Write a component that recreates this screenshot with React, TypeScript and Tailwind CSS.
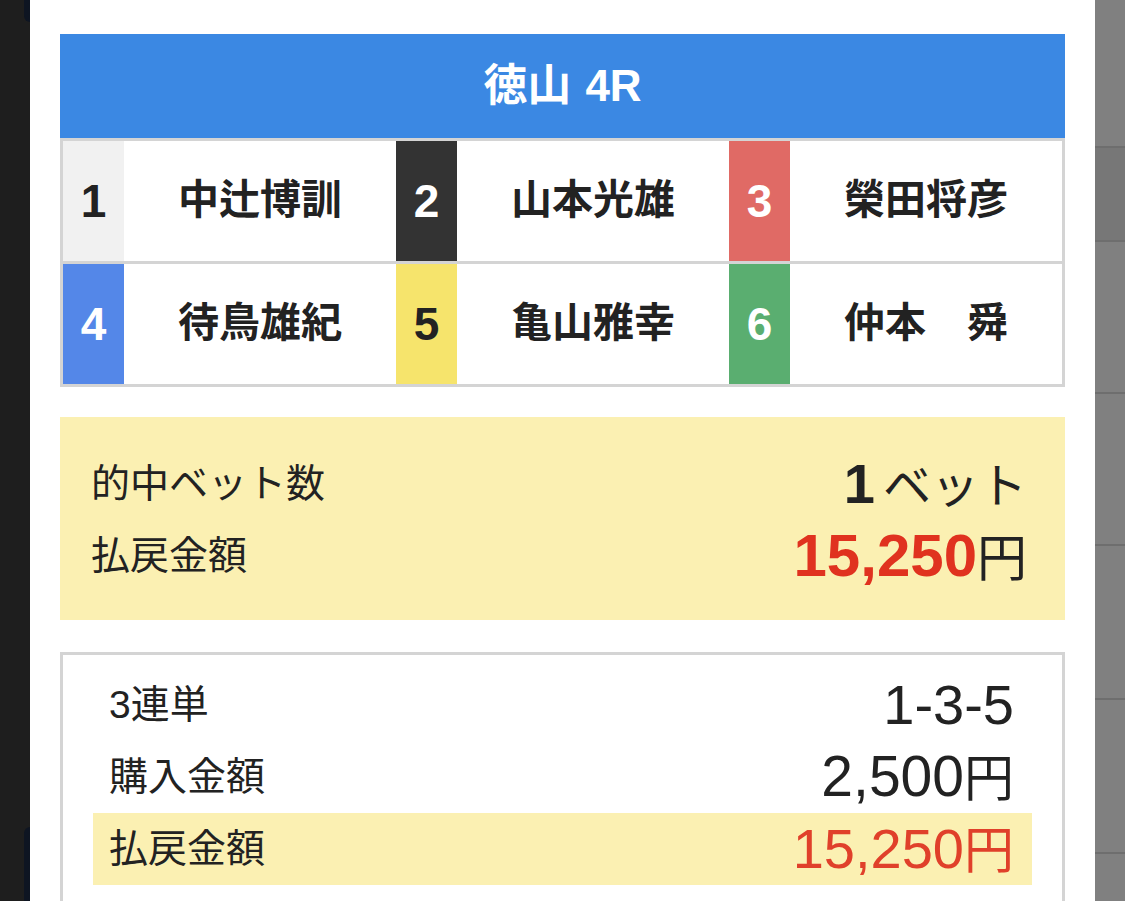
import { FC } from "react";

type Racer = { no: number; name: string; box: string; text: string };

const racers: Racer[] = [
  { no: 1, name: "中辻博訓", box: "bg-[#f1f1f1]", text: "text-[#222]" },
  { no: 2, name: "山本光雄", box: "bg-[#333333]", text: "text-white" },
  { no: 3, name: "榮田将彦", box: "bg-[#e06a65]", text: "text-white" },
  { no: 4, name: "待鳥雄紀", box: "bg-[#5487e8]", text: "text-white" },
  { no: 5, name: "亀山雅幸", box: "bg-[#f6e46c]", text: "text-[#222]" },
  { no: 6, name: "仲本　舜", box: "bg-[#5aae70]", text: "text-white" },
];

const font = "font-['Liberation_Sans','Noto_Sans_CJK_JP',sans-serif]";

const RacerCell: FC<{ r: Racer }> = ({ r }) => (
  <div className="flex h-full">
    <div
      className={`w-[61px] flex items-center justify-center text-[46px] font-bold ${r.box} ${r.text}`}
    >
      {r.no}
    </div>
    <div className="flex-1 flex items-center justify-center text-[41px] font-bold text-[#222] bg-white">
      {r.name}
    </div>
  </div>
);

const App: FC = () => {
  return (
    <div className={`w-[1125px] h-[901px] flex overflow-hidden ${font}`}>
      {/* dark backdrop on the left */}
      <div className="w-[30px] bg-[#1e1e1e] flex flex-col items-end">
        <div className="w-[6px] h-[22px] bg-[#0e1522] rounded-bl-[6px]" />
        <div className="flex-1" />
        <div className="w-[6px] h-[74px] bg-[#0e1522] rounded-tl-[6px]" />
      </div>

      {/* modal */}
      <div className="flex-1 bg-white px-[30px] pt-[34px]">
        <div className="h-[104px] bg-[#3b88e3] flex items-center justify-center gap-[14px] text-white text-[44px] font-bold">
          <span>徳山</span>
          <span>4R</span>
        </div>

        <div className="border-[3px] border-[#d4d4d4] bg-[#d4d4d4]">
          <div className="grid grid-cols-3 h-[120px] bg-white">
            {racers.slice(0, 3).map((r) => (
              <RacerCell key={r.no} r={r} />
            ))}
          </div>
          <div className="grid grid-cols-3 h-[120px] mt-[3px] bg-white">
            {racers.slice(3).map((r) => (
              <RacerCell key={r.no} r={r} />
            ))}
          </div>
        </div>

        {/* summary */}
        <div className="mt-[30px] h-[203px] bg-[#fbf0b2] pl-[31px] pr-[38px] pt-[31px] text-[#222]">
          <div className="h-[72px] flex items-center justify-between">
            <span className="text-[39px]">的中ベット数</span>
            <span className="flex items-baseline">
              <span className="text-[56px] font-bold mr-[8px]">1</span>
              <span className="text-[48px]">ベット</span>
            </span>
          </div>
          <div className="h-[72px] flex items-center justify-between">
            <span className="text-[39px]">払戻金額</span>
            <span className="flex items-baseline">
              <span className="text-[60px] font-bold text-[#e0321f]">15,250</span>
              <span className="text-[50px]">円</span>
            </span>
          </div>
        </div>

        {/* ticket */}
        <div className="mt-[32px] border-[3px] border-b-0 border-[#d4d4d4] h-[260px] px-[30px] pt-[14px] text-[#222]">
          <div className="h-[72px] flex items-center justify-between pl-4 pr-[18px]">
            <span className="text-[39px]">3連単</span>
            <span className="text-[56px]">1-3-5</span>
          </div>
          <div className="h-[72px] flex items-center justify-between pl-4 pr-[18px]">
            <span className="text-[39px]">購入金額</span>
            <span className="flex items-baseline">
              <span className="text-[57px]">2,500</span>
              <span className="text-[50px]">円</span>
            </span>
          </div>
          <div className="h-[72px] flex items-center justify-between pl-4 pr-[18px] bg-[#fbf0b2]">
            <span className="text-[39px]">払戻金額</span>
            <span className="flex items-baseline text-[#e0402a]">
              <span className="text-[56px]">15,250</span>
              <span className="text-[50px]">円</span>
            </span>
          </div>
        </div>
      </div>

      {/* page behind, on the right */}
      <div className="w-[30px] bg-[#808080] flex flex-col">
        <div className="h-[146px]" />
        <div className="h-[94px] bg-[#777777] border-t-2 border-[#6e6e6e]" />
        <div className="h-[152px] border-t-2 border-[#6e6e6e]" />
        <div className="h-[152px] border-t-2 border-[#6e6e6e]" />
        <div className="h-[154px] border-t-2 border-[#6e6e6e]" />
        <div className="h-[154px] border-t-2 border-[#6e6e6e]" />
        <div className="flex-1 border-t-2 border-[#6e6e6e]" />
      </div>
    </div>
  );
};

export default App;
